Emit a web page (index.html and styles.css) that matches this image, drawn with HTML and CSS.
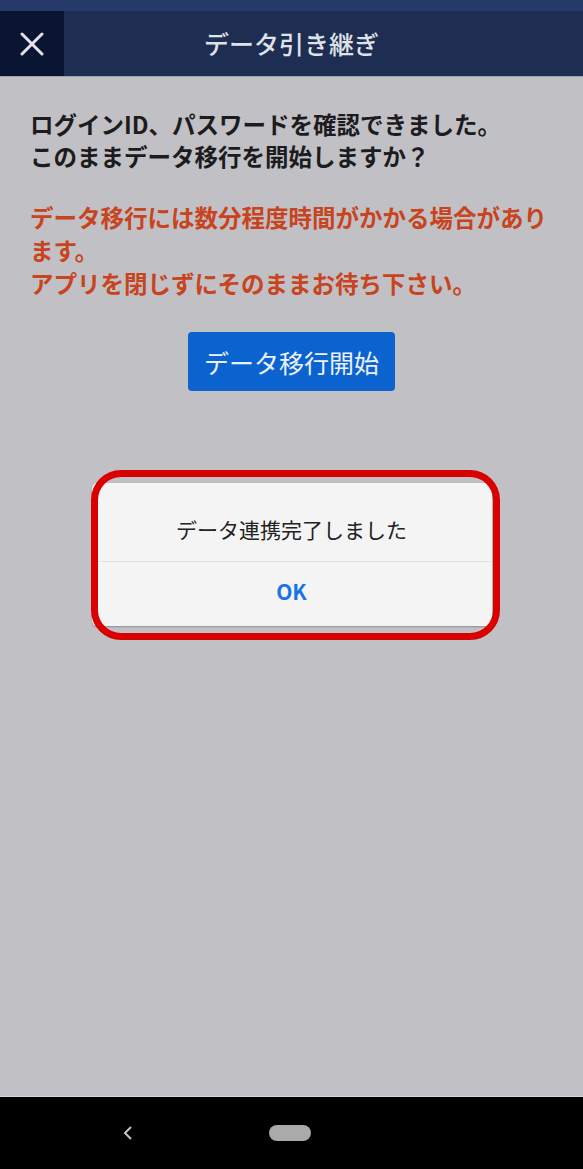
FILE: index.html
```html
<!DOCTYPE html>
<html lang="ja">
<head>
  <meta charset="utf-8">
  <title>データ引き継ぎ</title>
  <link rel="stylesheet" href="styles.css">
</head>
<body>
  <div class="app">
    <div class="status-bar"></div>

    <header class="top-bar">
      <button class="close-btn" aria-label="閉じる">
        <svg width="24" height="24" viewBox="0 0 24 24">
          <path d="M2 2 L22 22 M22 2 L2 22" stroke="#e2e4ea" stroke-width="3" stroke-linecap="round" fill="none"/>
        </svg>
      </button>
      <h1 class="title">データ引き継ぎ</h1>
    </header>

    <main class="content">
      <p class="message">ログインID、パスワードを確認できました。<br>このままデータ移行を開始しますか？</p>
      <p class="warning">データ移行には数分程度時間がかかる場合があります。<br>アプリを閉じずにそのままお待ち下さい。</p>
      <button class="start-btn">データ移行開始</button>

      <!-- 完了ダイアログ -->
      <div class="overlay">
        <div class="dialog">
          <div class="dialog-text">データ連携完了しました</div>
          <button class="dialog-ok">OK</button>
          <div class="highlight"></div>
        </div>
      </div>
    </main>

    <nav class="nav-bar">
      <svg class="nav-back" width="12" height="16" viewBox="0 0 12 16">
        <path d="M9 2 L3 8 L9 14" stroke="#c4c4c4" stroke-width="2" fill="none"/>
      </svg>
      <span class="nav-home"></span>
    </nav>
  </div>
</body>
</html>
```

FILE: styles.css
```css
body {
  margin: 0;
  font-family: "Noto Sans CJK JP", "Noto Sans", sans-serif;
  background-color: #000;
}

.app {
  width: 583px;
  height: 1169px;
  display: flex;
  flex-direction: column;
  background-color: #c1c0c5;
  overflow: hidden;
}

.status-bar {
  height: 11px;
  background-color: #253a68;
}

.top-bar {
  height: 65px;
  display: flex;
  align-items: stretch;
  background-color: #1e2d52;
  border-bottom: 1px solid #9ea3b2;
}

.close-btn {
  width: 64px;
  padding: 0;
  border: none;
  background-color: #0a1532;
  display: flex;
  align-items: center;
  justify-content: center;
}

.title {
  flex: 1;
  margin: 0;
  padding-right: 64px;
  text-align: center;
  line-height: 64px;
  font-size: 25px;
  font-weight: 500;
  color: #dfe2e9;
}

.content {
  flex: 1;
  position: relative;
  padding: 31px 20px 0 30px;
}

.message,
.warning {
  margin: 0;
  font-size: 23.5px;
  line-height: 32px;
  font-weight: 700;
}

.message {
  color: #1c1c1e;
}

.warning {
  margin-top: 29px;
  line-height: 33px;
  color: #c8441e;
}

.start-btn {
  display: block;
  margin: 32px 0 0 158px;
  width: 207px;
  height: 59px;
  padding: 0;
  border: none;
  border-radius: 4px;
  background-color: #0b63cf;
  color: #edf2fa;
  font-family: inherit;
  font-size: 25px;
}

.overlay {
  position: absolute;
  inset: 0;
  display: flex;
  justify-content: center;
  align-items: flex-start;
  padding-top: 406px;
}

.dialog {
  position: relative;
  width: 400px;
  background-color: #f4f4f4;
  border-radius: 5px;
  box-shadow: 0 1px 2px rgba(0, 0, 0, 0.25);
}

.dialog-text {
  height: 64px;
  padding-top: 14px;
  line-height: 64px;
  text-align: center;
  font-size: 21px;
  color: #222;
  border-bottom: 1px solid #e2e2e2;
}

.dialog-ok {
  display: block;
  box-sizing: border-box;
  width: 100%;
  height: 64px;
  padding: 0 0 6px;
  border: none;
  background: none;
  font-family: inherit;
  font-size: 21px;
  font-weight: 700;
  color: #1a73e8;
}

.highlight {
  position: absolute;
  top: -13px;
  left: -1px;
  right: -8px;
  bottom: -14px;
  border: 7px solid #d90000;
  border-radius: 30px;
}

.nav-bar {
  height: 72px;
  border-top: 1px solid #d8d8d8;
  background-color: #000;
  display: flex;
  align-items: center;
}

.nav-back {
  margin-left: 122px;
}

.nav-home {
  width: 42px;
  height: 16px;
  margin-left: 135px;
  border-radius: 8px;
  background-color: #aaa;
}
```
